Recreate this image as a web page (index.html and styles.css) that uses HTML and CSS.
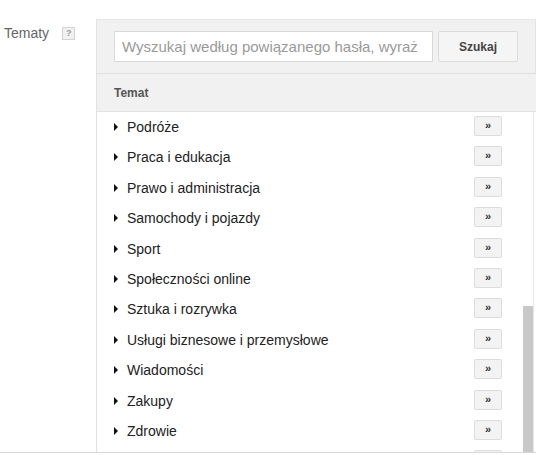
FILE: index.html
```html
<!DOCTYPE html>
<html lang="pl">
<head>
<meta charset="utf-8">
<title>Tematy</title>
<link rel="stylesheet" href="styles.css">
</head>
<body>
<div class="page">
  <div class="label-col">
    <span class="label">Tematy</span>
    <span class="help">?</span>
  </div>
  <div class="panel">
    <div class="search">
      <div class="input"><span class="ph">Wyszukaj według powiązanego hasła, wyraż</span></div>
      <button class="btn-search">Szukaj</button>
    </div>
    <div class="head">Temat</div>
    <div class="list">
      <div class="rows">
        <div class="row"><span class="tri"></span><span class="name">Podróże</span><span class="add">»</span></div>
        <div class="row"><span class="tri"></span><span class="name">Praca i edukacja</span><span class="add">»</span></div>
        <div class="row"><span class="tri"></span><span class="name">Prawo i administracja</span><span class="add">»</span></div>
        <div class="row"><span class="tri"></span><span class="name">Samochody i pojazdy</span><span class="add">»</span></div>
        <div class="row"><span class="tri"></span><span class="name">Sport</span><span class="add">»</span></div>
        <div class="row"><span class="tri"></span><span class="name">Społeczności online</span><span class="add">»</span></div>
        <div class="row"><span class="tri"></span><span class="name">Sztuka i rozrywka</span><span class="add">»</span></div>
        <div class="row"><span class="tri"></span><span class="name">Usługi biznesowe i przemysłowe</span><span class="add">»</span></div>
        <div class="row"><span class="tri"></span><span class="name">Wiadomości</span><span class="add">»</span></div>
        <div class="row"><span class="tri"></span><span class="name">Zakupy</span><span class="add">»</span></div>
        <div class="row"><span class="tri"></span><span class="name">Zdrowie</span><span class="add">»</span></div>
        <div class="row"><span class="tri"></span><span class="name"></span><span class="add"></span></div>
      </div>
      <div class="track"><div class="thumb"></div></div>
      <div class="edge"></div>
    </div>
  </div>
</div>
<div class="rule"></div>
</body>
</html>
```
FILE: styles.css
```css
html, body {
  margin: 0;
  padding: 0;
  background: #fff;
  font-family: Arial, "Liberation Sans", sans-serif;
}
.page {
  display: flex;
  align-items: flex-start;
  width: 536px;
}
.label-col {
  width: 92px;
  padding: 24px 0 0 4px;
  display: flex;
  align-items: flex-start;
}
.label {
  font-size: 14px;
  line-height: 18px;
  color: #666;
}
.help {
  margin: 3px 0 0 13px;
  width: 11px;
  height: 11px;
  border: 1px solid #d4d4d4;
  background: #f1f1f1;
  color: #999;
  font-size: 9px;
  font-weight: bold;
  line-height: 11px;
  text-align: center;
}
.panel {
  width: 439px;
  border-left: 1px solid #e2e2e2;
  border-top: 1px solid #e6e6e6;
  margin-top: 19px;
}
.search {
  display: flex;
  gap: 5px;
  padding: 11px 0 11px 17px;
  background: #f1f1f1;
  border-bottom: 1px solid #e0e0e0;
  border-right: 1px solid #e2e2e2;
}
.input {
  box-sizing: border-box;
  width: 319px;
  height: 31px;
  border: 1px solid #d9d9d9;
  background: #fff;
  padding: 0 3px 0 7px;
  overflow: hidden;
}
.ph {
  display: block;
  font-size: 15px;
  line-height: 29px;
  color: #9a9a9a;
  white-space: nowrap;
  overflow: hidden;
}
.btn-search {
  box-sizing: border-box;
  width: 80px;
  height: 31px;
  border: 1px solid #dcdcdc;
  border-radius: 2px;
  background: #f5f5f5;
  font-family: Arial, "Liberation Sans", sans-serif;
  font-size: 12px;
  font-weight: bold;
  color: #444;
  padding: 0;
}
.head {
  height: 37px;
  line-height: 38px;
  padding-left: 17px;
  background: #f1f1f1;
  border-bottom: 1px solid #e3e3e3;
  font-size: 12px;
  font-weight: bold;
  color: #555;
}
.list {
  display: flex;
  height: 340px;
  overflow: hidden;
}
.rows {
  width: 426px;
}
.row {
  box-sizing: border-box;
  display: flex;
  align-items: flex-start;
  height: 30.4px;
  padding: 4px 0 0 17px;
}
.tri {
  width: 0;
  height: 0;
  margin-top: 7px;
  border-top: 4px solid transparent;
  border-bottom: 4px solid transparent;
  border-left: 4px solid #111;
  margin-right: 9px;
}
.name {
  margin-top: 3px;
  font-size: 14px;
  line-height: 16px;
  color: #222;
}
.add {
  box-sizing: border-box;
  margin-left: auto;
  margin-right: 21px;
  width: 28px;
  height: 20px;
  border: 1px solid #dcdcdc;
  border-radius: 2px;
  background: #f3f3f3;
  font-size: 11px;
  font-weight: bold;
  line-height: 17px;
  text-align: center;
  color: #333;
}
.track {
  width: 10px;
  background: #fff;
}
.thumb {
  margin-top: 194px;
  height: 146px;
  background: #c8c8c8;
}
.edge {
  width: 1px;
  background: #e6e6e6;
}
.rule {
  height: 1px;
  background: #d8d8d8;
  width: 536px;
}
```
